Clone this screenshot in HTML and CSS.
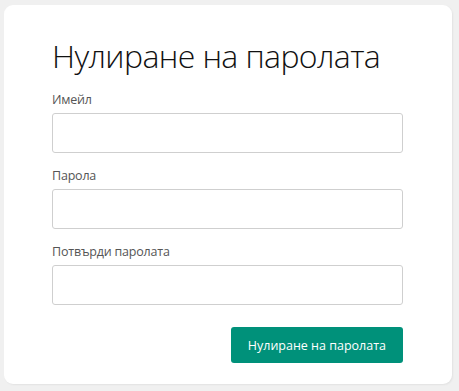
FILE: index.html
```html
<!DOCTYPE html>
<html lang="bg">
<head>
<meta charset="utf-8">
<title>Нулиране на паролата</title>
<link rel="stylesheet" href="styles.css">
</head>
<body>
<main class="card">
  <h1 class="title">Нулиране на паролата</h1>
  <form class="form">
    <div class="field">
      <label class="label" for="email">Имейл</label>
      <input class="input" id="email" type="email">
    </div>
    <div class="field">
      <label class="label" for="pass">Парола</label>
      <input class="input" id="pass" type="password">
    </div>
    <div class="field">
      <label class="label" for="pass2">Потвърди паролата</label>
      <input class="input" id="pass2" type="password">
    </div>
    <div class="actions">
      <button class="btn" type="button">Нулиране на паролата</button>
    </div>
  </form>
</main>
</body>
</html>
```
FILE: styles.css
```css
html, body {
  margin: 0;
  background: #f0f0f0;
}
body {
  padding: 5px 7px 7px 4px;
  font-family: "Open Sans", "Noto Sans", sans-serif;
}
.card {
  box-sizing: border-box;
  width: 448px;
  height: 379px;
  background: #fff;
  border-radius: 9px;
  padding: 32px 49px 21px 48px;
  box-shadow: 1px 1px 2px rgba(0,0,0,0.06);
}
.title {
  margin: 0 0 14px;
  font-size: 32px;
  font-weight: 300;
  line-height: 38px;
  letter-spacing: -0.6px;
  color: #111;
}
.form {
  display: flex;
  flex-direction: column;
}
.field {
  display: flex;
  flex-direction: column;
  margin-bottom: 12px;
}
.label {
  font-size: 12.5px;
  line-height: 20px;
  letter-spacing: -0.2px;
  color: #555;
  padding-top: 1px;
  margin-bottom: 3px;
}
.input {
  box-sizing: border-box;
  height: 40px;
  border: 1px solid #cfcfcf;
  border-radius: 3px;
  background: #fff;
}
.actions {
  display: flex;
  justify-content: flex-end;
  margin-top: 10px;
}
.btn {
  height: 36px;
  padding: 0 17px;
  border: none;
  border-radius: 3px;
  background: #00917a;
  color: #fff;
  font-family: inherit;
  font-size: 12.5px;
}
```
